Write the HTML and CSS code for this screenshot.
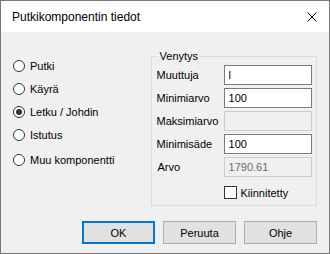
FILE: index.html
```html
<!DOCTYPE html>
<html lang="fi">
<head>
    <meta charset="UTF-8">
    <meta name="viewport" content="width=device-width, initial-scale=1.0">
    <title>Putkikomponentin tiedot</title>
    <link rel="stylesheet" href="styles.css">
</head>
<body>
    <div class="dialog">
        <div class="titlebar">
            <span class="title">Putkikomponentin tiedot</span>
            <svg class="close" width="10" height="10" viewBox="0 0 10 10">
                <path d="M0.5 0.5 L9.5 9.5 M9.5 0.5 L0.5 9.5" stroke="#000" stroke-width="1" fill="none"/>
            </svg>
        </div>

        <div class="content">
            <div class="types">
                <div class="radio"><span class="dot"></span>Putki</div>
                <div class="radio"><span class="dot"></span>Käyrä</div>
                <div class="radio"><span class="dot checked"></span>Letku / Johdin</div>
                <div class="radio"><span class="dot"></span>Istutus</div>
                <div class="radio last"><span class="dot"></span>Muu komponentti</div>
            </div>

            <div class="group">
                <span class="legend">Venytys</span>
                <div class="fields">
                    <div class="field"><label>Muuttuja</label><input type="text" value="l"></div>
                    <div class="field"><label>Minimiarvo</label><input type="text" value="100"></div>
                    <div class="field"><label>Maksimiarvo</label><input type="text" value="" disabled></div>
                    <div class="field"><label>Minimisäde</label><input type="text" value="100"></div>
                    <div class="field"><label class="arvo">Arvo</label><input type="text" value="1790.61" disabled></div>
                </div>
                <div class="check"><span class="box"></span>Kiinnitetty</div>
            </div>
        </div>

        <div class="buttons">
            <button class="default">OK</button>
            <button>Peruuta</button>
            <button>Ohje</button>
        </div>
    </div>
</body>
</html>
```

FILE: styles.css
```css
body {
    margin: 0;
    font-family: "Liberation Sans", Arial, sans-serif;
    font-size: 11px;
    color: #000;
    background: #f0f0f0;
}

.dialog {
    width: 330px;
    height: 254px;
    box-sizing: border-box;
    border: 1px solid #777;
    background: #f0f0f0;
}

.titlebar {
    height: 31px;
    background: #fff;
    display: flex;
    align-items: center;
    justify-content: space-between;
    padding: 0 12px 0 11px;
}

.title {
    font-size: 12px;
}

.close {
    display: block;
}

.content {
    display: flex;
    padding: 24px 12px 0 12px;
}

.types {
    width: 138px;
    margin-top: -2px;
}

.radio {
    height: 23px;
    display: flex;
    align-items: center;
}

.radio.last {
    margin-top: 2px;
}

.dot {
    width: 12px;
    height: 12px;
    box-sizing: border-box;
    border: 1px solid #333;
    border-radius: 50%;
    background: #fff;
    margin-right: 5px;
    display: flex;
    align-items: center;
    justify-content: center;
}

.dot.checked::after {
    content: "";
    width: 6px;
    height: 6px;
    border-radius: 50%;
    background: #333;
}

.group {
    position: relative;
    width: 167px;
    height: 150px;
    box-sizing: border-box;
    border: 1px solid #dcdcdc;
    padding: 8px 4px 6px 5px;
}

.legend {
    position: absolute;
    top: -7px;
    left: 6px;
    padding: 0 2px;
    background: #f0f0f0;
}

.fields {
    display: flex;
    flex-direction: column;
    gap: 3px;
}

.field {
    display: flex;
    align-items: center;
    height: 20px;
}

.field label {
    width: 67px;
}

.field label.arvo {
    padding-left: 1px;
    width: 66px;
}

.field input {
    width: 88px;
    height: 20px;
    box-sizing: border-box;
    border: 1px solid #7a7a7a;
    background: #fff;
    padding: 0 4px;
    margin: 0;
    font-family: "Liberation Sans", Arial, sans-serif;
    font-size: 11px;
    color: #000;
    outline: none;
}

.field input:disabled {
    border-color: #cccccc;
    background: #f0f0f0;
    color: #6d6d6d;
}

.check {
    display: flex;
    align-items: center;
    margin: 9px 0 0 67px;
    height: 13px;
}

.box {
    width: 13px;
    height: 13px;
    box-sizing: border-box;
    border: 1px solid #333;
    background: #fff;
    margin-right: 4px;
}

.buttons {
    display: flex;
    justify-content: flex-end;
    gap: 8px;
    padding: 15px 12px 0 0;
}

.buttons button {
    width: 73px;
    height: 23px;
    box-sizing: border-box;
    border: 1px solid #adadad;
    background: #e1e1e1;
    font-family: "Liberation Sans", Arial, sans-serif;
    font-size: 11px;
    color: #000;
    padding: 0;
}

.buttons button.default {
    border: 2px solid #0078d7;
}
```
